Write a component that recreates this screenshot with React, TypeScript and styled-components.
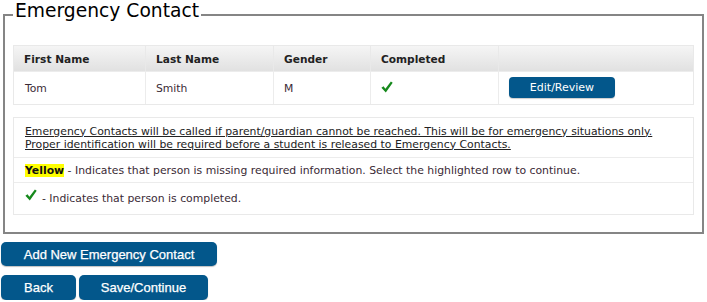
import React from "react";
import styled, { createGlobalStyle } from "styled-components";

const GlobalStyle = createGlobalStyle`
    body {
        margin: 0;
        background: #fff;
        font-family: "DejaVu Sans", Verdana, sans-serif;
        color: #333;
    }
`

const Page = styled.div`
    width: 707px;
`
const Fieldset = styled.fieldset`
    margin: 0 3px;
    padding: 15px 8px 17px;
    border: 2px solid #858585;
    min-width: 0;
`
const Legend = styled.legend`
    padding: 0 2px 9px;
    font-size: 18.7px;
    line-height: 21px;
    color: #000;
`
const Table = styled.div`
    display: grid;
    grid-template-columns: 131px 128px 97px 128px 1fr;
    border: 1px solid #e9e9e9;
`
const HeaderCell = styled.div`
    height: 25px;
    display: flex;
    align-items: center;
    padding-left: 10px;
    background: linear-gradient(#f5f5f5, #e1e1e1);
    border-left: 1px solid #e9e9e9;
    font-size: 10.6px;
    font-weight: bold;
    color: #222;
    &:first-child { border-left: none; }
`
const Cell = styled.div<{ $first?: boolean }>`
    height: 32px;
    display: flex;
    align-items: center;
    padding-left: ${p => p.$first ? 11 : 10}px;
    border-top: 1px solid #ececec;
    border-left: ${p => p.$first ? "none" : "1px solid #ececec"};
    font-size: 10.8px;
    color: #3a2a35;
`
const SmallButton = styled.button`
    width: 106px;
    height: 21px;
    margin-top: -2px;
    border: none;
    border-radius: 4px;
    background: #03578b;
    color: #fff;
    font-family: "DejaVu Sans", Verdana, sans-serif;
    font-size: 11px;
    padding: 0;
    box-shadow: 0 1px 1px rgba(0,0,0,0.2);
`
const InfoBox = styled.div`
    margin-top: 12px;
    border: 1px solid #e9e9e9;
`
const InfoRow = styled.div<{ $h: number }>`
    height: ${p => p.$h}px;
    box-sizing: border-box;
    display: flex;
    align-items: center;
    padding: 0 11px;
    border-top: 1px solid #ececec;
    font-size: 10.85px;
    line-height: 13px;
    color: #3a2a35;
    &:first-child { border-top: none; }
`
const Notice = styled.span`
    text-decoration: underline;
    color: #222;
`
const Highlight = styled.b`
    background: #ffff00;
    color: #111;
`
const CheckWrap = styled.span<{ $lift?: number }>`
    display: inline-flex;
    position: relative;
    top: -${p => p.$lift ?? 0}px;
    margin-right: 5px;
`
const Actions = styled.div`
    display: flex;
    flex-direction: column;
    align-items: flex-start;
    gap: 9px;
    padding: 8px 0 0 1px;
`
const ButtonRow = styled.div`
    display: flex;
    gap: 3px;
`
const BigButton = styled.button<{ $w: number; $h: number }>`
    width: ${p => p.$w}px;
    height: ${p => p.$h}px;
    border: none;
    border-radius: 5px;
    background: #03578b;
    color: #fff;
    font-family: "Liberation Sans", Arial, sans-serif;
    font-size: 13px;
    padding: 0;
    box-shadow: 0 1px 1px rgba(0,0,0,0.25);
    -webkit-text-stroke: 0.25px #fff;
`

function Check() {
    return (
        <svg width="12" height="12" viewBox="0 0 12 12">
            <path d="M0.4 6.8 L2.5 5.2 L4.4 7.7 L9.9 0.4 L11.7 1.7 L4.8 11.6 Z" fill="#16891c" />
        </svg>
    )
}

const headers = ["First Name", "Last Name", "Gender", "Completed", ""];

function App() {
    return (
        <Page>
            <GlobalStyle />
            <Fieldset>
                <Legend>Emergency Contact</Legend>
                <Table>
                    {headers.map((h, i) => <HeaderCell key={i}>{h}</HeaderCell>)}
                    <Cell $first>Tom</Cell>
                    <Cell>Smith</Cell>
                    <Cell>M</Cell>
                    <Cell><CheckWrap $lift={1}><Check /></CheckWrap></Cell>
                    <Cell><SmallButton>Edit/Review</SmallButton></Cell>
                </Table>
                <InfoBox>
                    <InfoRow $h={39}>
                        <Notice>
                            Emergency Contacts will be called if parent/guardian cannot be reached. This will be for emergency situations only.<br />
                            Proper identification will be required before a student is released to Emergency Contacts.
                        </Notice>
                    </InfoRow>
                    <InfoRow $h={25}>
                        <span><Highlight>Yellow</Highlight> - Indicates that person is missing required information. Select the highlighted row to continue.</span>
                    </InfoRow>
                    <InfoRow $h={32}>
                        <CheckWrap $lift={4}><Check /></CheckWrap>
                        <span>- Indicates that person is completed.</span>
                    </InfoRow>
                </InfoBox>
            </Fieldset>
            <Actions>
                <BigButton $w={216} $h={24}>Add New Emergency Contact</BigButton>
                <ButtonRow>
                    <BigButton $w={75} $h={25}>Back</BigButton>
                    <BigButton $w={129} $h={25}>Save/Continue</BigButton>
                </ButtonRow>
            </Actions>
        </Page>
    )
}

export default App;
